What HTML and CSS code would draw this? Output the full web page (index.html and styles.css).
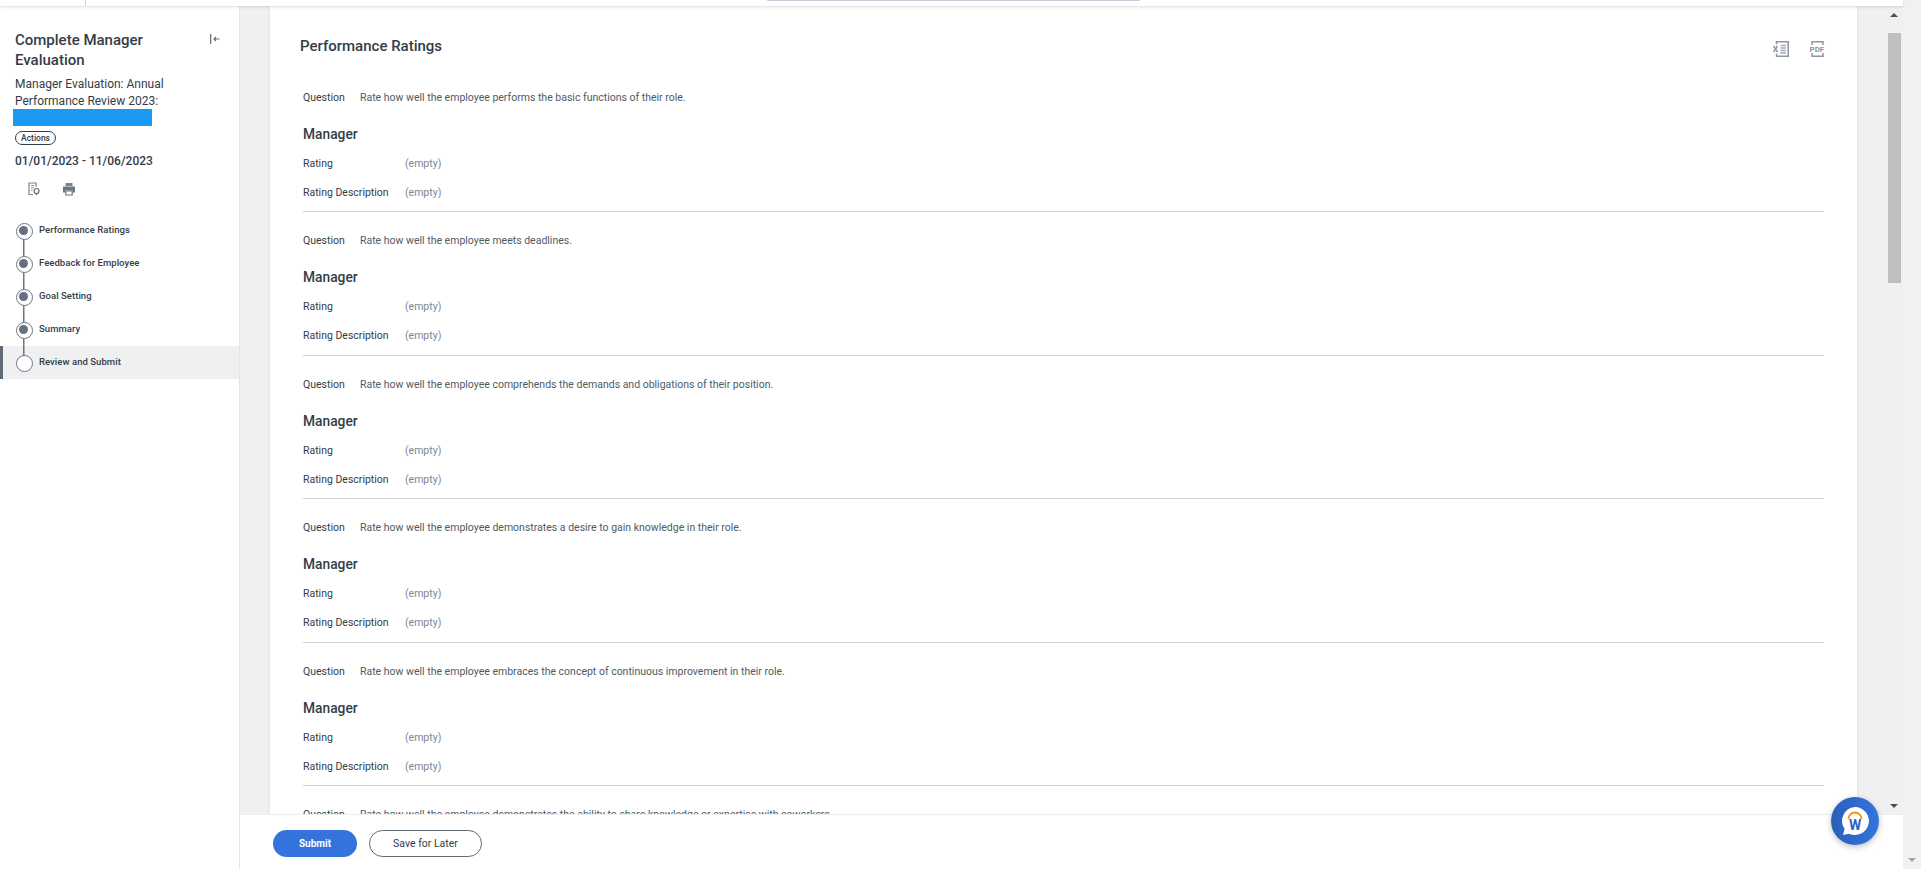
FILE: index.html
```html
<!DOCTYPE html>
<html lang="en">

<head>
  <meta charset="UTF-8">
  <meta name="viewport" content="width=device-width, initial-scale=1.0">
  <title>Complete Manager Evaluation</title>
  <link rel="stylesheet" href="styles.css">
</head>

<body>
  <div class="page">
    <div class="window">
      <div class="topbar">
        <div class="topbar-tab"></div>
        <div class="topbar-pill"></div>
      </div>
      <div class="shell">
        <aside class="sidebar">
          <div class="side-head">
            <h1>Complete Manager Evaluation</h1>
            <svg class="collapse" width="10" height="10" viewBox="0 0 10 10">
              <path d="M.7 0v10" stroke="#5e6a75" stroke-width="1.2" fill="none" />
              <path d="M9.5 5H4M6 3 4 5l2 2" stroke="#5e6a75" stroke-width="1.1" fill="none" />
            </svg>
          </div>
          <div class="side-sub">Manager Evaluation: Annual Performance Review 2023:</div>
          <div class="redact"></div>
          <button class="actions">Actions</button>
          <div class="dates">01/01/2023 - 11/06/2023</div>
          <div class="side-icons">
            <svg width="14" height="14" viewBox="0 0 14 14">
              <path d="M6 12.5H2V1h7v4" stroke="#7b858f" stroke-width="1.2" fill="none" />
              <path d="M4 3.5h3M4 5.8h3M4 8h1.5" stroke="#8d96a1" stroke-width="1" fill="none" />
              <circle cx="9.5" cy="9" r="2.5" stroke="#5e6a75" stroke-width="1.2" fill="none" />
              <path d="M8 11l1.5 2.5L11 11z" fill="#5e6a75" />
            </svg>
            <svg width="14" height="14" viewBox="0 0 14 14">
              <path d="M3.5 1h7v3h-7z" fill="#7b858f" />
              <path d="M1 4.5h12v6h-2V8.5H3v2H1z" fill="#6a7580" />
              <path d="M3.8 9h6.4v4H3.8z" stroke="#6a7580" stroke-width="1.2" fill="none" />
            </svg>
          </div>
          <ol class="steps">
            <li class="step done">Performance Ratings</li>
            <li class="step done">Feedback for Employee</li>
            <li class="step done">Goal Setting</li>
            <li class="step done">Summary</li>
            <li class="step current">Review and Submit</li>
          </ol>
        </aside>
        <div class="right">
          <div class="content-row">
            <div class="gutter"></div>
            <main class="content">
              <div class="content-head">
                <h2>Performance Ratings</h2>
                <div class="export">
                  <svg width="16" height="16" viewBox="0 0 16 16">
                    <path d="M3.5 3.5V.8h11.7v14.4H3.5v-2.7" stroke="#8d96a1" stroke-width="1.5" fill="none" />
                    <path d="M7.5 4.5H13M7.5 7H13M7.5 9.5H13M7.5 12H13" stroke="#a5adb6" stroke-width="1.3" fill="none" />
                    <path d="M.5 5l4 6M4.5 5l-4 6" stroke="#8d96a1" stroke-width="1.5" fill="none" />
                  </svg>
                  <svg width="16" height="16" viewBox="0 0 16 16">
                    <path d="M2 4V.8h11V4M2 12v3.200h11V12" stroke="#8d96a1" stroke-width="1.5" fill="none" />
                    <text x="-.5" y="10.9" class="pdf-label">PDF</text>
                  </svg>
                </div>
              </div>

              <section class="item">
                <div class="q"><span class="q-label">Question</span><span class="q-text">Rate how well the employee performs the basic functions of their role.</span></div>
                <h3>Manager</h3>
                <div class="field"><span class="f-label">Rating</span><span class="empty">(empty)</span></div>
                <div class="field"><span class="f-label">Rating Description</span><span class="empty">(empty)</span></div>
              </section>
              <section class="item">
                <div class="q"><span class="q-label">Question</span><span class="q-text">Rate how well the employee meets deadlines.</span></div>
                <h3>Manager</h3>
                <div class="field"><span class="f-label">Rating</span><span class="empty">(empty)</span></div>
                <div class="field"><span class="f-label">Rating Description</span><span class="empty">(empty)</span></div>
              </section>
              <section class="item">
                <div class="q"><span class="q-label">Question</span><span class="q-text">Rate how well the employee comprehends the demands and obligations of their position.</span></div>
                <h3>Manager</h3>
                <div class="field"><span class="f-label">Rating</span><span class="empty">(empty)</span></div>
                <div class="field"><span class="f-label">Rating Description</span><span class="empty">(empty)</span></div>
              </section>
              <section class="item">
                <div class="q"><span class="q-label">Question</span><span class="q-text">Rate how well the employee demonstrates a desire to gain knowledge in their role.</span></div>
                <h3>Manager</h3>
                <div class="field"><span class="f-label">Rating</span><span class="empty">(empty)</span></div>
                <div class="field"><span class="f-label">Rating Description</span><span class="empty">(empty)</span></div>
              </section>
              <section class="item">
                <div class="q"><span class="q-label">Question</span><span class="q-text">Rate how well the employee embraces the concept of continuous improvement in their role.</span></div>
                <h3>Manager</h3>
                <div class="field"><span class="f-label">Rating</span><span class="empty">(empty)</span></div>
                <div class="field"><span class="f-label">Rating Description</span><span class="empty">(empty)</span></div>
              </section>
              <section class="item">
                <div class="q"><span class="q-label">Question</span><span class="q-text">Rate how well the employee demonstrates the ability to share knowledge or expertise with coworkers.</span></div>
              </section>
            </main>
            <div class="inner-scroll">
              <span class="arrow-up"></span>
              <div class="thumb"></div>
              <span class="arrow-down"></span>
            </div>
          </div>
          <footer class="footer">
            <button class="btn primary">Submit</button>
            <button class="btn">Save for Later</button>
          </footer>
        </div>
      </div>
    </div>
    <div class="outer-scroll">
      <span class="arrow-down light"></span>
    </div>
  </div>

  <div class="chat">
    <svg width="30" height="30" viewBox="0 0 30 30">
      <path d="M15 1a14 14 0 1 1-6 26.700L3 29l1.600-6A14 14 0 0 1 15 1z" fill="#fff" />
      <path d="M8.5 13a6.500 6.500 0 0 1 13 0" stroke="#f2921d" stroke-width="1.8" fill="none" />
      <text x="15" y="24" class="chat-w">W</text>
    </svg>
  </div>
</body>

</html>
```

FILE: styles.css
```css
* {
  box-sizing: border-box;
}

html,
body {
  margin: 0;
  height: 100%;
  overflow: hidden;
}

body {
  font-family: Roboto, "Liberation Sans", sans-serif;
  font-size: 10.5px;
  color: #333d47;
  background: #fff;
}

.page {
  display: flex;
  height: 869px;
}

.window {
  width: 1903px;
  display: flex;
  flex-direction: column;
}

.outer-scroll {
  width: 18px;
  background: #f1f1f1;
  display: flex;
  flex-direction: column;
  justify-content: flex-end;
  align-items: center;
  padding-bottom: 7px;
}

.topbar {
  height: 6px;
  flex: none;
  display: flex;
  justify-content: center;
  background: #fff;
  box-shadow: 0 1px 3px rgba(0, 0, 0, 0.14);
  position: relative;
  z-index: 2;
}

.topbar-tab {
  position: absolute;
  left: 85px;
  top: 0;
  width: 1px;
  height: 6px;
  background: #ced3d9;
}

.topbar-pill {
  width: 373px;
  height: 1px;
  margin-left: 3px;
  background: #c9ccd8;
  border-radius: 0 0 3px 3px;
}

.shell {
  flex: 1;
  display: flex;
  min-height: 0;
}

/* left side */
.sidebar {
  width: 240px;
  flex: none;
  border-right: 1px solid #e3e5e8;
  padding-top: 24px;
}

.side-head {
  display: flex;
  justify-content: space-between;
  padding: 0 19px 0 15px;
}

.side-head h1 {
  margin: 0;
  width: 150px;
  font-size: 15px;
  line-height: 20px;
  font-weight: 500;
  color: #333d47;
}

.collapse {
  margin-top: 4px;
}

.side-sub {
  margin-top: 6px;
  padding: 0 15px;
  width: 190px;
  font-size: 12px;
  line-height: 16.5px;
}

.redact {
  width: 139px;
  height: 17px;
  margin-left: 13px;
  background: #1a9af2;
}

.actions {
  display: block;
  margin: 5px 0 0 15px;
  width: 41px;
  height: 14px;
  padding: 0;
  border: 1px solid #333d47;
  border-radius: 7px;
  background: #fff;
  font: 500 8.5px Roboto, sans-serif;
  color: #333d47;
}

.dates {
  margin-top: 8px;
  padding: 0 15px;
  font-size: 12px;
  line-height: 16px;
  font-weight: 500;
}

.side-icons {
  display: flex;
  gap: 21px;
  margin-top: 13px;
  padding-left: 27px;
}

.steps {
  list-style: none;
  margin: 18px 0 0;
  padding: 0;
}

.step {
  position: relative;
  height: 33px;
  padding-left: 39px;
  line-height: 31px;
  font-size: 9.5px;
  font-weight: 500;
  letter-spacing: 0.05px;
  background-image: linear-gradient(#6c7681, #6c7681);
  background-repeat: no-repeat;
  background-size: 1.5px 33px;
  background-position: 22.75px 0;
}

.step:first-child {
  background-position: 22.75px 16px;
}

.step::before {
  content: "";
  position: absolute;
  left: 16px;
  top: 9px;
  width: 15px;
  height: 15px;
  border-radius: 50%;
  border: 1.5px solid #6c7681;
  background: #fff;
}

.step.done::after {
  content: "";
  position: absolute;
  left: 19px;
  top: 12px;
  width: 9px;
  height: 9px;
  border-radius: 50%;
  background: #667180;
}

.step.current {
  background-color: #eff0f2;
  border-left: 3px solid #5e6a75;
  padding-left: 36px;
  background-size: 1.5px 12px;
  background-position: 19.75px 0;
}

.step.current::before {
  left: 13px;
}

/* main column */
.right {
  flex: 1;
  min-width: 0;
  display: flex;
  flex-direction: column;
}

.content-row {
  height: 808px;
  flex: none;
  display: flex;
  overflow: hidden;
}

.gutter {
  width: 30px;
  flex: none;
  background: #eff0f2;
  box-shadow: inset -2px 0 2px -1px rgba(0, 0, 0, 0.05);
}

.content {
  width: 1587px;
  flex: none;
  padding: 0 33px;
  overflow: hidden;
  background: #fff;
}

.content-head {
  display: flex;
  justify-content: space-between;
  height: 63px;
  padding-top: 31px;
}

.content-head h2 {
  margin: 0 0 0 -3px;
  font-size: 15px;
  line-height: 18px;
  font-weight: 500;
  color: #333d47;
}

.export {
  display: flex;
  gap: 21px;
  margin-right: -2px;
  margin-top: 4px;
}

.pdf-label {
  font: 700 8px Roboto, sans-serif;
  fill: #8d96a1;
}

.item {
  height: 143.4px;
  padding-top: 14px;
  border-bottom: 1px solid #ced3d9;
}

.item:last-child {
  border-bottom: 0;
}

.q {
  display: flex;
  height: 30px;
  line-height: 30px;
}

.q-label {
  width: 57px;
}

.q-text {
  color: #4f5a65;
}

h3 {
  margin: 11px 0 5px;
  font-size: 13.8px;
  line-height: 20px;
  font-weight: 500;
  color: #333d47;
}

.field {
  display: flex;
  height: 29px;
  line-height: 29px;
}

.f-label {
  width: 102px;
}

.empty {
  color: #7b8793;
}

.inner-scroll {
  flex: 1;
  background: #eff0f2;
  position: relative;
  box-shadow: inset 2px 0 2px -1px rgba(0, 0, 0, 0.05);
}

.thumb {
  position: absolute;
  left: 31px;
  top: 27px;
  width: 13px;
  height: 250px;
  background: #bfbfbf;
}

.arrow-up,
.arrow-down {
  position: absolute;
  left: 33px;
  width: 0;
  height: 0;
  border-left: 4px solid transparent;
  border-right: 4px solid transparent;
}

.arrow-up {
  top: 7px;
  border-bottom: 4px solid #505050;
}

.arrow-down {
  bottom: 6px;
  border-top: 4px solid #505050;
}

.arrow-down.light {
  position: static;
  border-top-color: #a3a3a3;
}

.footer {
  height: 55px;
  flex: none;
  display: flex;
  align-items: center;
  gap: 12px;
  padding: 2px 0 0 33px;
  border-top: 1px solid #eceef0;
  background: #fff;
}

.btn {
  height: 27px;
  width: 113px;
  padding: 0;
  border: 1px solid #5e6a75;
  border-radius: 14px;
  background: #fff;
  font: 400 10.5px Roboto, sans-serif;
  color: #333d47;
}

.btn.primary {
  width: 84px;
  border: 0;
  background: #3473dc;
  color: #fff;
  font: 700 10px Roboto, sans-serif;
}

.chat {
  position: absolute;
  left: 1831px;
  top: 797px;
  width: 48px;
  height: 48px;
  border-radius: 50%;
  background: linear-gradient(90deg, #2a5fb8, #3375de);
  box-shadow: 0 2px 6px rgba(0, 0, 0, 0.25);
  display: flex;
  align-items: center;
  justify-content: center;
}

.chat-w {
  font: 700 14px Roboto, sans-serif;
  fill: #2b63bd;
  text-anchor: middle;
}
```
